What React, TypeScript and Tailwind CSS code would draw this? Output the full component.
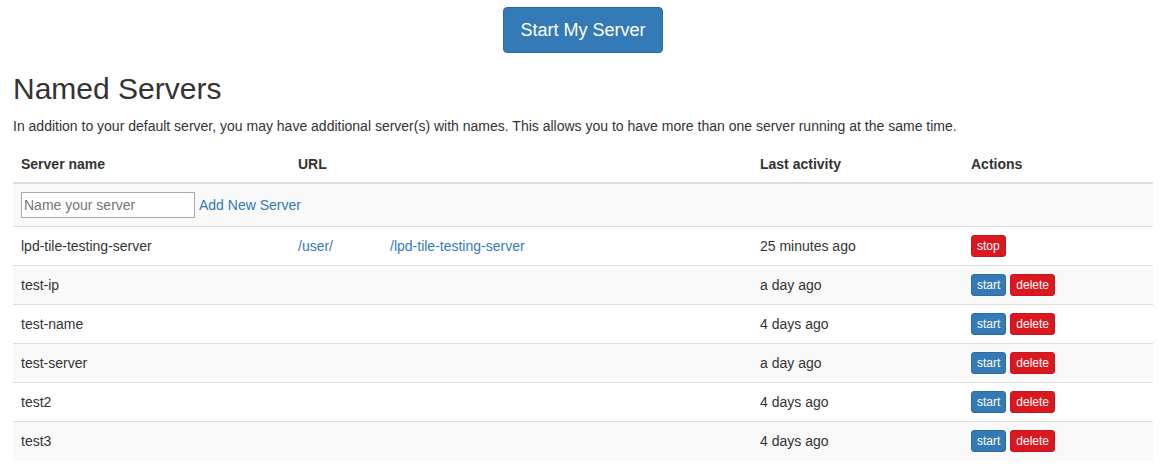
import React from 'react'

type Server = {
  name: string
  url?: boolean
  activity: string
  running: boolean
}

const servers: Server[] = [
  { name: 'lpd-tile-testing-server', url: true, activity: '25 minutes ago', running: true },
  { name: 'test-ip', activity: 'a day ago', running: false },
  { name: 'test-name', activity: '4 days ago', running: false },
  { name: 'test-server', activity: 'a day ago', running: false },
  { name: 'test2', activity: '4 days ago', running: false },
  { name: 'test3', activity: '4 days ago', running: false },
]

function XsButton({ kind, children }: { kind: 'primary' | 'danger'; children: React.ReactNode }) {
  const color =
    kind === 'primary'
      ? 'bg-[#337ab7] border-[#2e6da4]'
      : 'bg-[#d9191f] border-[#c8161c]'
  return (
    <button className={`${color} inline-block align-middle border text-white text-[12px] leading-[18px] px-[5px] py-px rounded-[3px]`}>
      {children}
    </button>
  )
}

export default function App() {
  return (
    <div className="min-h-[468px] bg-white text-[#333] text-[14px] leading-5" style={{ fontFamily: '"Liberation Sans", Arial, sans-serif' }}>
      <div className="ml-[13px] w-[1140px] pt-[7px]">
        <div className="flex justify-center">
          <button className="bg-[#337ab7] border border-[#2e6da4] text-white text-[18px] leading-[24px] px-4 py-[10px] rounded-[4px]">
            Start My Server
          </button>
        </div>

        <h2 className="mt-[19px] mb-[11px] text-[30px] leading-[33px] font-normal">Named Servers</h2>
        <p className="mb-[10px]">
          In addition to your default server, you may have additional server(s) with names. This allows you to have more than one server running at the same time.
        </p>

        <table className="w-full border-collapse">
          <thead>
            <tr className="text-left">
              <th className="w-[277px] p-2 font-bold border-b-2 border-[#ddd]">Server name</th>
              <th className="w-[462px] p-2 font-bold border-b-2 border-[#ddd]">URL</th>
              <th className="w-[211px] p-2 font-bold border-b-2 border-[#ddd]">Last activity</th>
              <th className="p-2 font-bold border-b-2 border-[#ddd]">Actions</th>
            </tr>
          </thead>
          <tbody>
            <tr className="bg-[#f9f9f9]">
              <td colSpan={4} className="p-2 border-t border-[#ddd]">
                <div className="flex items-center">
                  <input
                    placeholder="Name your server"
                    className="w-[174px] h-[26px] border border-[#a9a9a9] px-[2px] text-[14px] bg-white placeholder:text-[#757575] outline-none"
                  />
                  <a className="ml-1 text-[#337ab7] cursor-pointer">Add New Server</a>
                </div>
              </td>
            </tr>
            {servers.map((s, i) => (
              <tr key={s.name} className={i % 2 === 1 ? 'bg-[#f9f9f9]' : 'bg-white'}>
                <td className="px-2 h-[39px] pt-0 pb-px border-t border-[#ddd] align-middle">{s.name}</td>
                <td className="px-2 pt-0 pb-px border-t border-[#ddd] align-middle">
                  {s.url && (
                    <a className="text-[#337ab7] cursor-pointer">
                      /user/<span className="inline-block w-[57px]"></span>/lpd-tile-testing-server
                    </a>
                  )}
                </td>
                <td className="px-2 pt-0 pb-px border-t border-[#ddd] align-middle">{s.activity}</td>
                <td className="px-2 pt-0 pb-px border-t border-[#ddd] align-middle">
                  {s.running ? (
                    <XsButton kind="danger">stop</XsButton>
                  ) : (
                    <div className="flex gap-1">
                      <XsButton kind="primary">start</XsButton>
                      <XsButton kind="danger">delete</XsButton>
                    </div>
                  )}
                </td>
              </tr>
            ))}
          </tbody>
        </table>
      </div>
    </div>
  )
}
